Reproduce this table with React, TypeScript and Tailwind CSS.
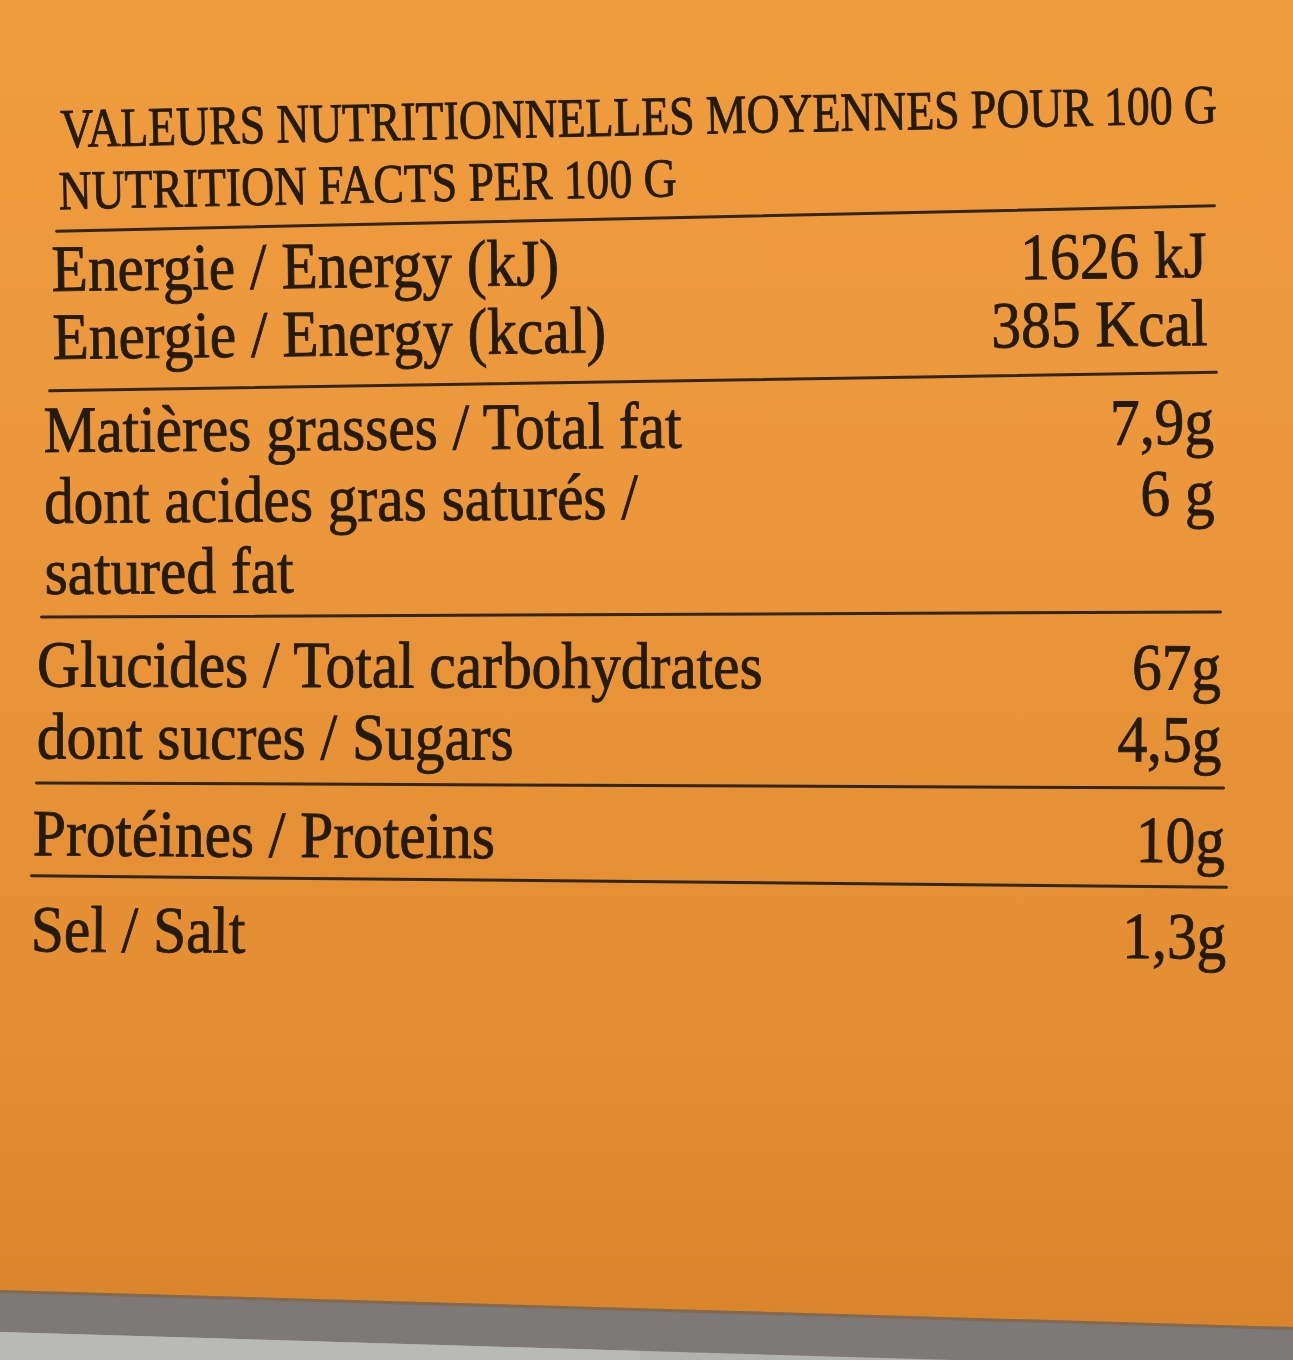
type Row = { label: string; value?: string };

// The label is photographed a little off square, so every block carries
// its own offsets and a slight tilt.
type Section = {
  rows: Row[];
  box: string; // left edge, width, padding, tilt
  lead: string;
  rule?: string; // the line under the block
};

const sections: Section[] = [
  {
    rows: [
      { label: "Energie / Energy (kJ)", value: "1626 kJ" },
      { label: "Energie / Energy (kcal)", value: "385 Kcal" },
    ],
    box: "ml-[52px] w-[1155px] pt-[8px] pb-[16px] -rotate-[0.7deg]",
    lead: "leading-[68px]",
    rule: "ml-[48px] w-[1170px] -rotate-[0.9deg]",
  },
  {
    rows: [
      { label: "Matières grasses / Total fat", value: "7,9g" },
      { label: "dont acides gras saturés /", value: "6 g" },
      { label: "satured fat" },
    ],
    box: "ml-[44px] w-[1170px] pt-[7px] pb-[10px] -rotate-[0.4deg]",
    lead: "leading-[71px]",
    rule: "ml-[40px] w-[1182px] -rotate-[0.25deg]",
  },
  {
    rows: [
      { label: "Glucides / Total carbohydrates", value: "67g" },
      { label: "dont sucres / Sugars", value: "4,5g" },
    ],
    box: "ml-[37px] w-[1184px] pt-[14px] pb-[10px] rotate-[0.15deg]",
    lead: "leading-[72px]",
    rule: "ml-[35px] w-[1190px] rotate-[0.25deg]",
  },
  {
    rows: [{ label: "Protéines / Proteins", value: "10g" }],
    box: "ml-[33px] w-[1192px] pt-[14px] pb-[7px] rotate-[0.35deg]",
    lead: "leading-[72px]",
    rule: "ml-[30px] w-[1198px] rotate-[0.55deg]",
  },
  {
    rows: [{ label: "Sel / Salt", value: "1,3g" }],
    box: "ml-[31px] w-[1195px] pt-[14px] rotate-[0.35deg]",
    lead: "leading-[72px]",
  },
];

function Rule({ className }: { className: string }) {
  return <div className={`h-[3px] bg-[#32251a] rounded-full ${className}`} />;
}

export default function App() {
  return (
    <div className="w-[1293px] h-[1360px] overflow-hidden flex flex-col bg-[linear-gradient(180deg,#ef9c3e_0%,#eb963b_40%,#e48d33_75%,#d9832a_100%)] text-[#241b10] font-['Liberation_Serif',serif] [-webkit-text-stroke:0.9px_#241b10]">
      {/* heading */}
      <div className="ml-[60px] w-[1160px] pt-[86px] pb-[7px] text-[55px] leading-[62px] whitespace-nowrap -rotate-[1.2deg]">
        <div>
          <span className="inline-block origin-left scale-x-[0.83]">VALEURS NUTRITIONNELLES MOYENNES POUR 100 G</span>
        </div>
        <div className="-ml-[3px]">
          <span className="inline-block origin-left scale-x-[0.83]">NUTRITION FACTS PER 100 G</span>
        </div>
      </div>
      <Rule className="ml-[55px] w-[1161px] -rotate-[1.25deg]" />

      {sections.map((s, i) => (
        <div key={i}>
          <div className={`${s.box} text-[66px] ${s.lead}`}>
            {s.rows.map((r) => (
              <div key={r.label} className="flex items-baseline justify-between whitespace-nowrap">
                <span className="inline-block origin-left scale-x-[0.9]">{r.label}</span>
                {r.value && <span className="inline-block origin-right scale-x-[0.9]">{r.value}</span>}
              </div>
            ))}
          </div>
          {s.rule && <Rule className={s.rule} />}
        </div>
      ))}

      <div className="flex-1" />

      {/* bottom edge of the box and the table it stands on */}
      <svg width="1293" height="80" viewBox="0 0 1293 80" className="block shrink-0">
        <polygon points="0,10 1293,47 1293,80 0,80" fill="#7d7978" />
        <polygon points="0,10 1293,47 1293,50 0,13" fill="#8a5a2a" opacity="0.5" />
        <polygon points="0,52 1293,90 1293,80 0,80" fill="#b2b2b0" />
        <polygon points="0,52 640,71 640,80 0,80" fill="#b9b9b7" />
      </svg>
    </div>
  );
}
